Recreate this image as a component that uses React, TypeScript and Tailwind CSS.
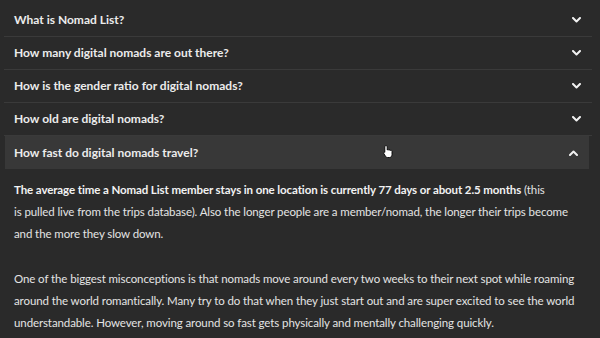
import React from "react";

const questions = [
  "What is Nomad List?",
  "How many digital nomads are out there?",
  "How is the gender ratio for digital nomads?",
  "How old are digital nomads?",
];

function Chevron({ up }: { up?: boolean }) {
  return (
    <svg width="9" height="6" viewBox="0 0 9 6" className="shrink-0">
      <path
        d={up ? "M1 5 L4.5 1.5 L8 5" : "M1 1 L4.5 4.5 L8 1"}
        fill="none"
        stroke="#f2f2f2"
        strokeWidth="2"
        strokeLinecap="round"
        strokeLinejoin="round"
      />
    </svg>
  );
}

function Cursor() {
  return (
    <svg width="11" height="13" viewBox="0 0 11 13" className="absolute left-[378px] top-[9px]">
      <path
        d="M3 0.5 C3.8 0.5 4.2 1 4.2 1.8 L4.2 5 C4.6 4.6 5.6 4.6 5.9 5.2 C6.3 4.8 7.2 4.8 7.5 5.5 C7.9 5.2 9 5.3 9 6.3 L9 9.5 C9 11 8 12.5 6.5 12.5 L4.5 12.5 C3.5 12.5 2.9 11.9 2.3 11 L0.7 8.3 C0.3 7.6 1.1 6.8 1.8 7.3 L1.8 1.8 C1.8 1 2.2 0.5 3 0.5 Z"
        fill="#ffffff"
        stroke="#000000"
        strokeWidth="0.9"
      />
    </svg>
  );
}

export default function App() {
  return (
    <div
      className="w-[600px] h-[338px] overflow-hidden bg-[#2a2a2a] text-[#ececec]"
      style={{ fontFamily: "Lato, 'Noto Sans', sans-serif" }}
    >
      <div className="ml-[4px] mr-[8px] pt-[4px]">
        {questions.map((q) => (
          <div
            key={q}
            className="h-[33px] flex items-center justify-between pl-[10px] pr-[11px] border-b border-[#3a3a3a]"
          >
            <span className="text-[12px] font-bold">{q}</span>
            <Chevron />
          </div>
        ))}
        <div className="relative h-[33px] flex items-center justify-between pl-[10px] pr-[11px] bg-[#383838] ml-[1px] mr-[3px]">
          <span className="text-[12px] font-bold -ml-[1px]">How fast do digital nomads travel?</span>
          <Chevron up />
          <Cursor />
        </div>
        <div className="pl-[10px] pt-[10px] text-[11.5px] leading-[22px] text-[#e4e4e4] whitespace-nowrap tracking-[-0.1px]">
          <p>
            <b className="font-bold text-[11.5px] text-[#f2f2f2] tracking-[-0.1px]">
              The average time a Nomad List member stays in one location is currently 77 days or about 2.5 months
            </b>{" "}
            (this
            <br />
            is pulled live from the trips database). Also the longer people are a member/nomad, the longer their trips become
            <br />
            and the more they slow down.
          </p>
          <p className="mt-[23px]">
            One of the biggest misconceptions is that nomads move around every two weeks to their next spot while roaming
            <br />
            around the world romantically. Many try to do that when they just start out and are super excited to see the world
            <br />
            understandable. However, moving around so fast gets physically and mentally challenging quickly.
          </p>
        </div>
      </div>
    </div>
  );
}
